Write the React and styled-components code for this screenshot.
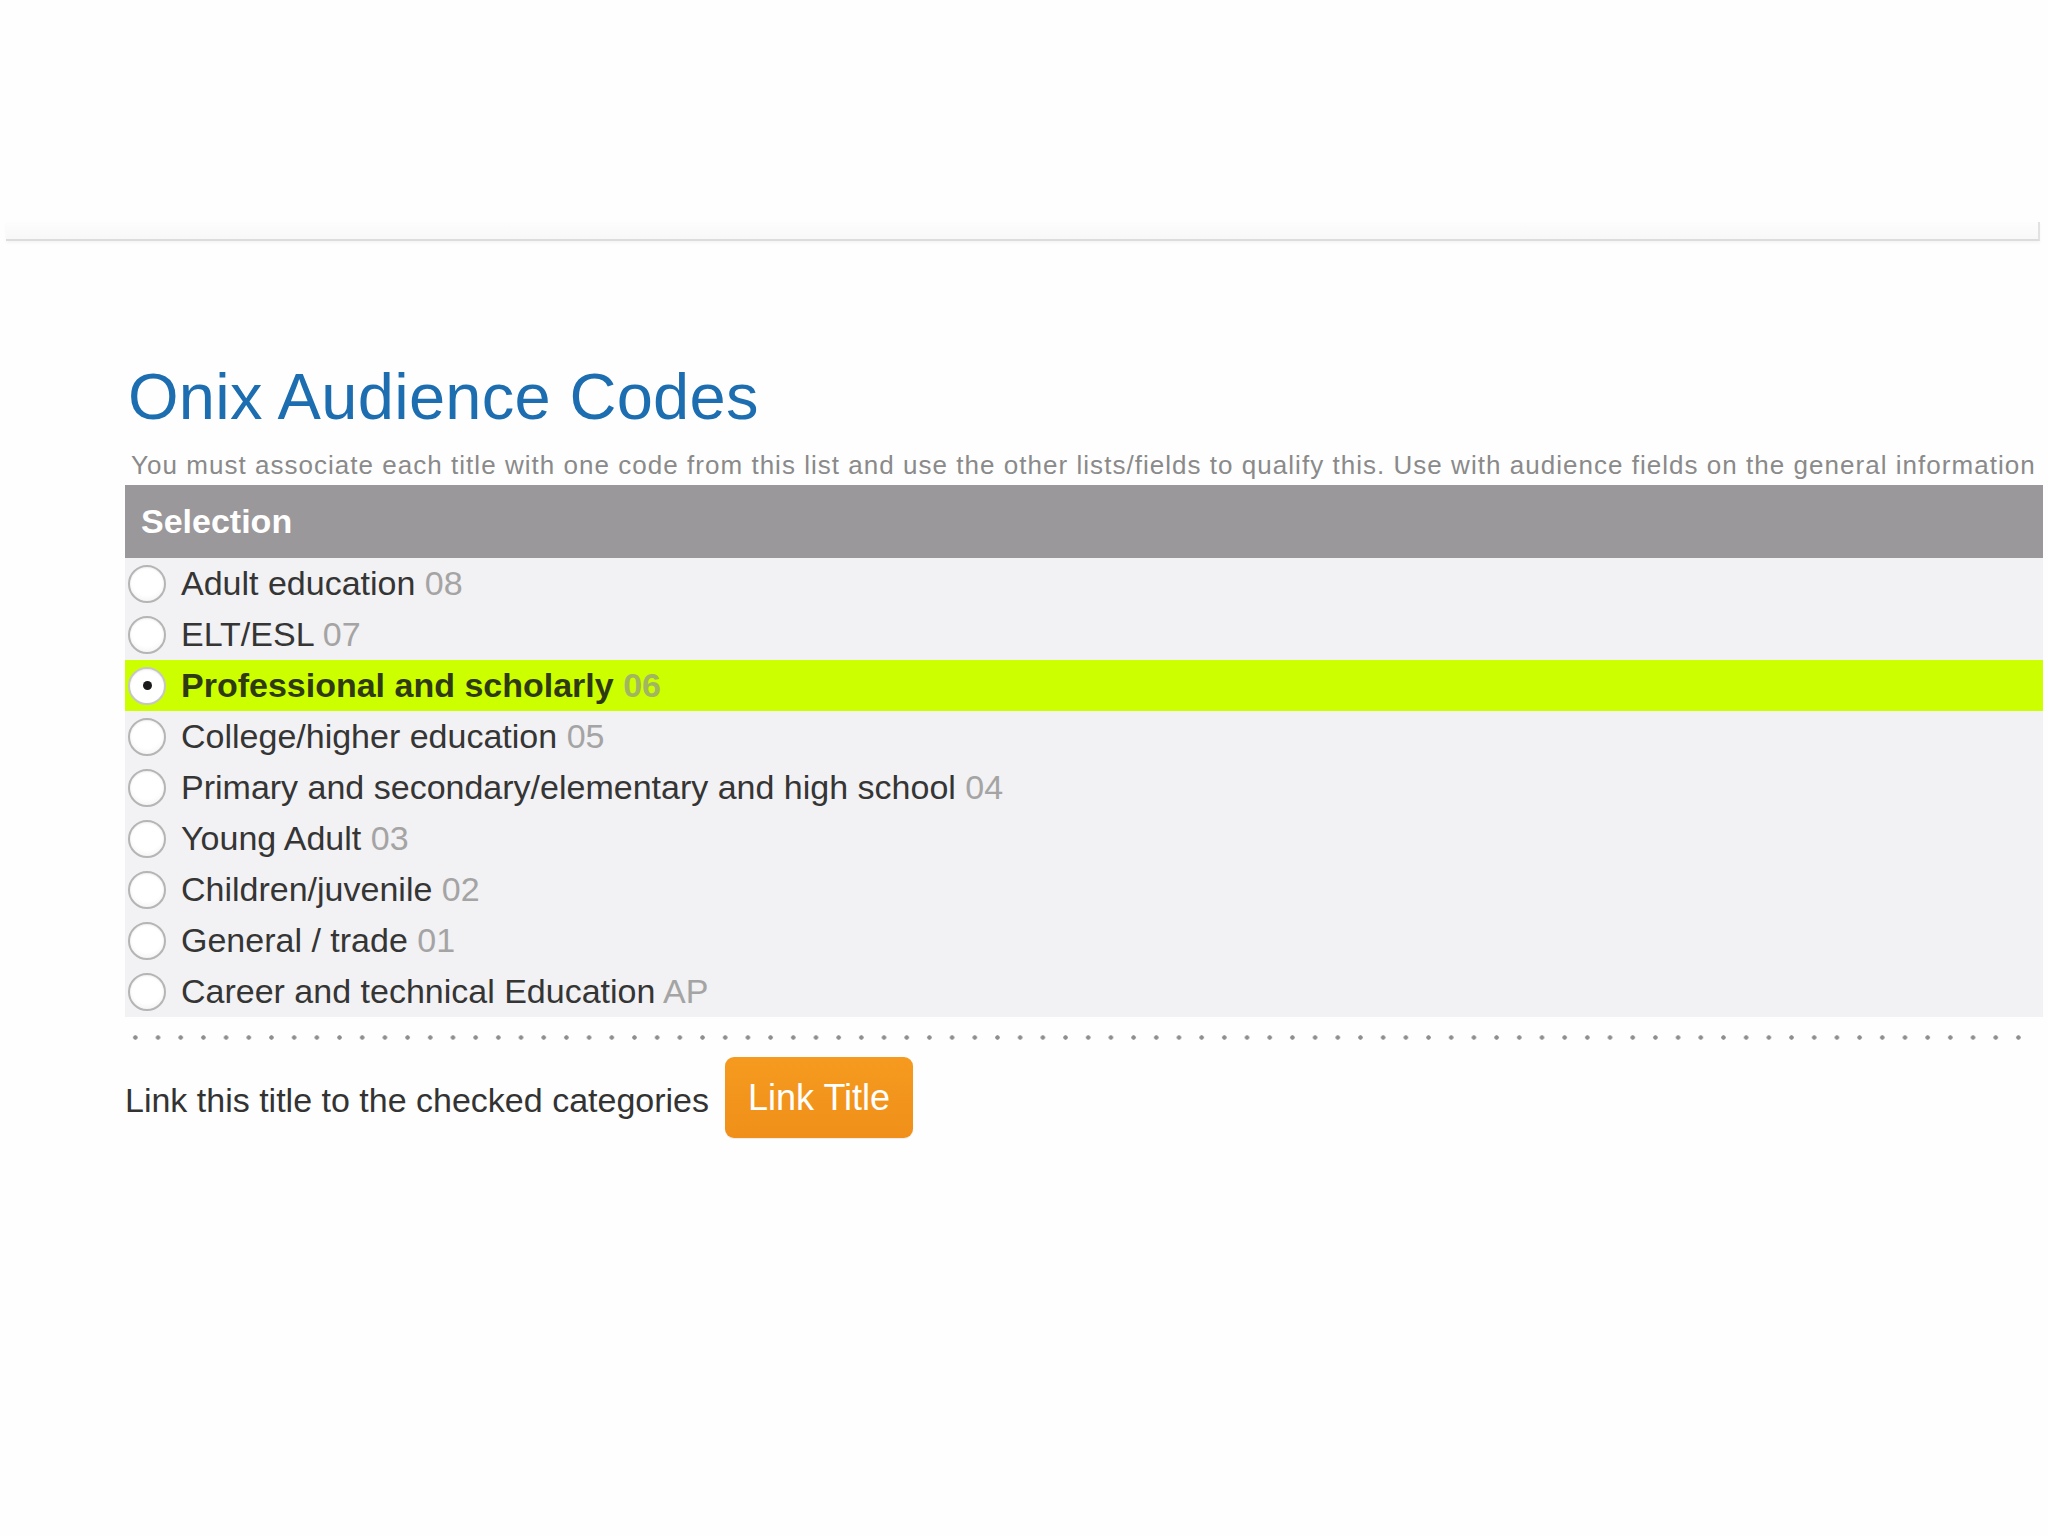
import React, { useState } from "react";
import styled, { createGlobalStyle } from "styled-components";

const GlobalStyle = createGlobalStyle`
  html, body {
    margin: 0;
    padding: 0;
    background: #fefefe;
  }
  body {
    font-family: "Liberation Sans", Arial, Helvetica, sans-serif;
    color: #3a3a3a;
  }
`;

const Page = styled.div`
  padding-top: 222px;
  padding-bottom: 200px;
  width: 2048px;
  box-sizing: border-box;
`;

const TopStrip = styled.div`
  margin-left: 6px;
  width: 2034px;
  height: 19px;
  box-sizing: border-box;
  background: linear-gradient(#fdfdfd, #f8f8f8);
  border-bottom: 2px solid #dcdcdc;
  border-right: 2px solid #e2e2e2;
  box-shadow: 0 2px 3px rgba(0, 0, 0, 0.04);
`;

const Main = styled.main`
  margin-left: 125px;
  width: 1918px;
`;

const Title = styled.h1`
  margin: 123px 0 0 3px;
  font-size: 65px;
  line-height: 65px;
  font-weight: normal;
  color: #1d6eb0;
  letter-spacing: 0.3px;
`;

const Intro = styled.p`
  margin: 21px 0 5px 6px;
  font-size: 26px;
  line-height: 30px;
  letter-spacing: 1.03px;
  color: #8a8a8a;
  white-space: nowrap;
`;

const HeaderBar = styled.div`
  height: 73px;
  display: flex;
  align-items: center;
  padding-left: 16px;
  background: #9b989b;
  color: #ffffff;
  font-size: 34px;
  font-weight: bold;
`;

const List = styled.div`
  background: #f2f1f3;
  display: flex;
  flex-direction: column;
`;

const Row = styled.label`
  height: 51px;
  display: flex;
  align-items: center;
  gap: 15px;
  padding-left: 3px;
  background: ${(p) => (p.$selected ? "#ccff00" : "transparent")};
  font-size: 34px;
  font-weight: ${(p) => (p.$selected ? "bold" : "normal")};
  color: ${(p) => (p.$selected ? "#2f3a10" : "#353535")};
  cursor: pointer;
`;

const Radio = styled.input`
  appearance: none;
  -webkit-appearance: none;
  margin: 0;
  flex: none;
  width: 38px;
  height: 38px;
  border-radius: 50%;
  border: 2px solid #b5b5b5;
  background: radial-gradient(circle at 50% 40%, #ffffff 55%, #ececec 100%);
  box-shadow: inset 0 1px 2px rgba(0, 0, 0, 0.07);
  display: grid;
  place-items: center;
  cursor: pointer;

  &:checked {
    background: #ffffff;
    border-color: #c6c6c6;
  }
  &:checked::after {
    content: "";
    width: 9px;
    height: 9px;
    border-radius: 50%;
    background: #1a1a1a;
  }
`;

const Code = styled.span`
  color: ${(p) => (p.$selected ? "#a2b560" : "#a4a4a4")};
`;

const Dots = styled.div`
  margin-top: 18px;
  height: 5px;
  width: 1905px;
  background-image: radial-gradient(circle, #8e8e8e 1.9px, transparent 2.5px);
  background-size: 22.7px 5px;
  background-position: -1px 0;
  background-repeat: repeat-x;
`;

const Actions = styled.div`
  margin-top: 17px;
  display: flex;
  align-items: center;
  gap: 16px;
`;

const ActionLabel = styled.span`
  font-size: 34px;
  color: #333333;
  padding-top: 6px;
`;

const LinkButton = styled.button`
  height: 81px;
  padding: 0 23px;
  border: none;
  border-radius: 9px;
  background: linear-gradient(#f59a1f, #f0901a);
  color: #ffffff;
  font-family: "Liberation Sans", Arial, Helvetica, sans-serif;
  font-size: 36px;
  cursor: pointer;
  box-shadow: 0 1px 1px rgba(0, 0, 0, 0.08);
`;

const CODES = [
  { label: "Adult education", code: "08" },
  { label: "ELT/ESL", code: "07" },
  { label: "Professional and scholarly", code: "06" },
  { label: "College/higher education", code: "05" },
  { label: "Primary and secondary/elementary and high school", code: "04" },
  { label: "Young Adult", code: "03" },
  { label: "Children/juvenile", code: "02" },
  { label: "General / trade", code: "01" },
  { label: "Career and technical Education", code: "AP" },
];

export default function App() {
  const [selected, setSelected] = useState("06");
  return (
    <>
      <GlobalStyle />
      <Page>
        <TopStrip />
        <Main>
          <Title>Onix Audience Codes</Title>
          <Intro>
            You must associate each title with one code from this list and use the other
            lists/fields to qualify this. Use with audience fields on the general information
          </Intro>
          <HeaderBar>Selection</HeaderBar>
          <List>
            {CODES.map((c) => {
              const isSel = c.code === selected;
              return (
                <Row key={c.code} $selected={isSel}>
                  <Radio
                    type="radio"
                    name="audience"
                    value={c.code}
                    checked={isSel}
                    onChange={() => setSelected(c.code)}
                  />
                  <span>
                    {c.label} <Code $selected={isSel}>{c.code}</Code>
                  </span>
                </Row>
              );
            })}
          </List>
          <Dots />
          <Actions>
            <ActionLabel>Link this title to the checked categories</ActionLabel>
            <LinkButton type="button">Link Title</LinkButton>
          </Actions>
        </Main>
      </Page>
    </>
  );
}
